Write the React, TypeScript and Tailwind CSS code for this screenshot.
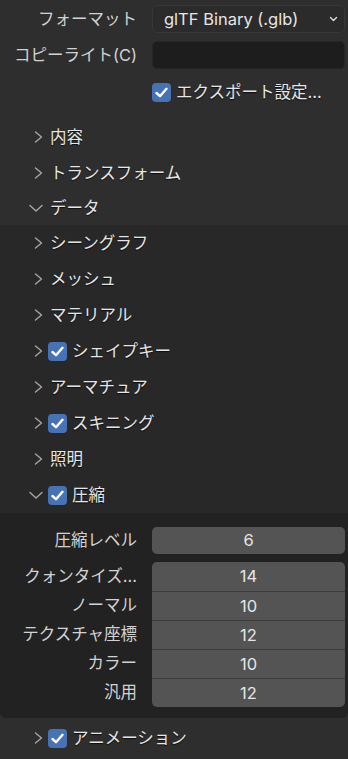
import React from 'react';

const font = { fontFamily: 'Inter, "Noto Sans CJK JP", sans-serif' };

function Chevron({ open }: { open?: boolean }) {
  return open ? (
    <svg width="14" height="8" viewBox="0 0 14 8" className="shrink-0">
      <path d="M1 1.5 L7 7 L13 1.5" fill="none" stroke="#a6a6a6" strokeWidth="1.4" strokeLinecap="round" strokeLinejoin="round" />
    </svg>
  ) : (
    <svg width="9" height="12" viewBox="0 0 9 12" className="shrink-0">
      <path d="M1.5 1 L7.5 6 L1.5 11" fill="none" stroke="#a6a6a6" strokeWidth="1.4" strokeLinecap="round" strokeLinejoin="round" />
    </svg>
  );
}

function Check() {
  return (
    <span className="w-[19px] h-[19px] rounded-[4px] bg-[#4772b3] flex items-center justify-center shrink-0">
      <svg width="13" height="11" viewBox="0 0 13 11">
        <path d="M1.5 6 L5 9.2 L11.5 1.8" fill="none" stroke="#ffffff" strokeWidth="2.4" strokeLinecap="round" strokeLinejoin="round" />
      </svg>
    </span>
  );
}

function Header({ label, open, checked, h = 'h-[36px]' }: { label: string; open?: boolean; checked?: boolean; h?: string }) {
  return (
    <div className={`${h} flex items-center text-[16.5px] text-[#e6e6e6] [text-shadow:0_1px_1px_rgba(0,0,0,0.7)]`}>
      <div className={open ? 'w-[48px] flex justify-end pr-[5px]' : 'w-[48px] flex justify-end pr-[5px]'}>
        <Chevron open={open} />
      </div>
      {checked && (
        <span className="mr-[5px]">
          <Check />
        </span>
      )}
      <span className={checked ? '' : 'ml-[2px]'}>{label}</span>
    </div>
  );
}

function Label({ text }: { text: string }) {
  return <div className="w-[152px] pr-[15px] text-right text-[16.5px] text-[#d2d2d2] whitespace-nowrap">{text}</div>;
}

const grouped: [string, string][] = [
  ['クォンタイズ...', '14'],
  ['ノーマル', '10'],
  ['テクスチャ座標', '12'],
  ['カラー', '10'],
  ['汎用', '12'],
];

export default function App() {
  return (
    <div style={font} className="w-[348px] h-[759px] bg-[#2e2e2e] overflow-hidden leading-none">
      <div className="pt-[5px]">
        <div className="flex items-center h-[28px]">
          <Label text="フォーマット" />
          <div className="w-[193px] h-[28px] rounded-[5px] bg-[#2b2b2b] border border-[#373737] flex items-center justify-between pl-[11px] pr-[6px] text-[16.5px] text-[#e6e6e6]">
            <span>glTF Binary (.glb)</span>
            <svg width="9" height="6" viewBox="0 0 9 6">
              <path d="M1.5 1.5 L4.5 4.5 L7.5 1.5" fill="none" stroke="#dddddd" strokeWidth="1.4" strokeLinecap="round" strokeLinejoin="round" />
            </svg>
          </div>
        </div>
        <div className="flex items-center h-[28px] mt-[8px]">
          <Label text="コピーライト(C)" />
          <div className="w-[193px] h-[28px] rounded-[5px] bg-[#1d1d1d] border border-[#262626]" />
        </div>
        <div className="flex items-center h-[19px] mt-[14px] pl-[152px]">
          <Check />
          <span className="ml-[5px] text-[16.5px] text-[#e6e6e6] [text-shadow:0_1px_1px_rgba(0,0,0,0.7)]">エクスポート設定...</span>
        </div>
      </div>
      <div className="mt-[17px]">
        <Header label="内容" />
        <Header label="トランスフォーム" />
        <Header label="データ" open h="h-[34px]" />
      </div>
      <div className="bg-[#282828] rounded-b-[6px]">
        <Header label="シーングラフ" />
        <Header label="メッシュ" />
        <Header label="マテリアル" />
        <Header label="シェイプキー" checked />
        <Header label="アーマチュア" />
        <Header label="スキニング" checked />
        <Header label="照明" />
        <Header label="圧縮" open checked />
        <div className="bg-[#222222] rounded-b-[6px] pt-[14px] pb-[11px]">
          <div className="flex items-center h-[27px]">
            <Label text="圧縮レベル" />
            <div className="w-[193px] h-[27px] rounded-[5px] bg-[#545454] flex items-center justify-center text-[16.5px] text-[#e6e6e6]">6</div>
          </div>
          <div className="flex mt-[8px]">
            <div className="flex flex-col">
              {grouped.map(([l]) => (
                <div key={l} className="h-[29px] flex items-center">
                  <Label text={l} />
                </div>
              ))}
            </div>
            <div className="w-[193px] rounded-[5px] overflow-hidden bg-[#545454] flex flex-col">
              {grouped.map(([l, v], i) => (
                <div
                  key={l}
                  className={
                    i === 0
                      ? 'h-[29px] flex items-center justify-center text-[16.5px] text-[#e6e6e6]'
                      : 'h-[29px] flex items-center justify-center text-[16.5px] text-[#e6e6e6] border-t border-[#3c3c3c]'
                  }
                >
                  {v}
                </div>
              ))}
            </div>
          </div>
        </div>
      </div>
      <div className="mt-[2px]">
        <Header label="アニメーション" checked />
      </div>
    </div>
  );
}
